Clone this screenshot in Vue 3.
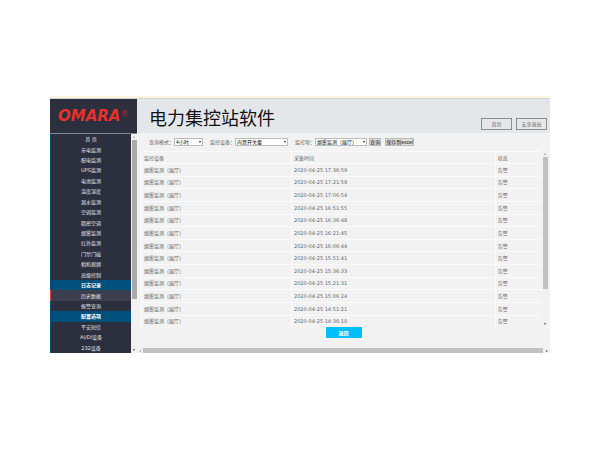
<template>
  <div class="page">
    <div class="app">
      <header class="header">
        <div class="logo">OMARA<sup>®</sup></div>
        <h1>电力集控站软件</h1>
        <nav class="actions">
          <button type="button">首页</button>
          <button type="button">安全退出</button>
        </nav>
      </header>

      <div class="body">
        <aside class="sidebar">
          <nav class="menu">
            <a
              v-for="item in menu"
              :key="item.text"
              href="#"
              :class="{ group: item.group, current: item.text === current }"
              @click.prevent="current = item.text"
            >{{ item.text }}</a>
          </nav>
          <div class="vbar side-bar">
            <i class="arrow up"></i>
            <span class="thumb"></span>
            <i class="arrow down"></i>
          </div>
        </aside>

        <main class="content">
          <form class="filters" @submit.prevent>
            <label for="mode">查询模式：</label>
            <div class="select mode">
              <select id="mode" v-model="mode">
                <option>4小时</option>
                <option>8小时</option>
              </select>
            </div>
            <label for="device">监控设备：</label>
            <div class="select device">
              <select id="device" v-model="device">
                <option>内置开关量</option>
              </select>
            </div>
            <label for="point">监控项：</label>
            <div class="select point">
              <select id="point" v-model="point">
                <option>烟雾监测（展厅）</option>
              </select>
            </div>
            <button type="submit" class="query">查询</button>
            <button type="button" class="export">保存到excel</button>
          </form>

          <div class="list">
            <table>
              <thead>
                <tr>
                  <th class="name">监控设备</th>
                  <th class="time">采集时间</th>
                  <th>状态</th>
                </tr>
              </thead>
              <tbody>
                <tr v-for="time in times" :key="time">
                  <td>烟雾监测（展厅）</td>
                  <td>2020-04-25 {{ time }}</td>
                  <td>告警</td>
                </tr>
              </tbody>
            </table>
            <div class="vbar list-bar">
              <i class="arrow up"></i>
              <span class="thumb"></span>
              <i class="arrow down"></i>
            </div>
          </div>

          <button type="button" class="back">返回</button>

          <div class="hbar">
            <i class="arrow left"></i>
            <span class="thumb"></span>
            <i class="arrow right"></i>
          </div>
        </main>
      </div>
    </div>
  </div>
</template>

<script setup>
import { ref } from 'vue'

const current = ref('历史数据')
const mode = ref('4小时')
const device = ref('内置开关量')
const point = ref('烟雾监测（展厅）')

const menu = [
  { text: '首 页' },
  { text: '市电监测' },
  { text: '配电监测' },
  { text: 'UPS监测' },
  { text: '电池监测' },
  { text: '温度湿度' },
  { text: '漏水监测' },
  { text: '空调监测' },
  { text: '精密空调' },
  { text: '烟雾监测' },
  { text: '红外监测' },
  { text: '门禁门磁' },
  { text: '相机视频' },
  { text: '高级控制' },
  { text: '日志记录', group: true },
  { text: '历史数据' },
  { text: '报警查询' },
  { text: '配置选项', group: true },
  { text: '平安短信' },
  { text: 'AI/DI设备' },
  { text: '232设备' }
]

const times = [
  '17:36:59',
  '17:21:59',
  '17:06:54',
  '16:51:55',
  '16:36:48',
  '16:21:45',
  '16:06:44',
  '15:51:41',
  '15:36:33',
  '15:21:31',
  '15:06:24',
  '14:51:21',
  '14:36:10'
]
</script>

<style>
body {
  margin: 0;
  background: #fff;
}
</style>

<style scoped>
.page {
  padding: 96px 50px;
  font-family: "DejaVu Sans", "Noto Sans CJK SC", sans-serif;
  font-size: 5px;
  line-height: 8px;
  color: #666;
}

.page * {
  box-sizing: border-box;
}

button,
select {
  font-family: "Liberation Sans", "Noto Sans CJK SC", sans-serif;
  font-size: 5px;
  line-height: 6px;
  margin: 0;
  padding: 0;
}

.app {
  border-top: 2px solid #fdf6de;
}

.header {
  display: flex;
  height: 35px;
  background: #e3e7ea;
  border-top: 1px solid #d0d4d5;
}

.logo {
  flex: none;
  width: 87px;
  padding-left: 8px;
  background: #2b2f3e;
  color: #e93029;
  font-size: 15px;
  font-weight: bold;
  font-style: italic;
  line-height: 34px;
  white-space: nowrap;
}

.logo sup {
  color: #b3242b;
  font-size: 8px;
  font-weight: normal;
  font-style: normal;
  line-height: 8px;
  vertical-align: 4px;
}

h1 {
  flex: 1;
  margin: 0;
  padding-left: 12px;
  color: #111;
  font-family: "Noto Sans CJK SC", sans-serif;
  font-size: 18px;
  font-weight: normal;
  line-height: 36px;
}

.actions {
  display: flex;
  gap: 4px;
  align-items: flex-end;
  padding: 0 3px 3px 0;
}

.actions button {
  width: 31px;
  height: 12px;
  border: 1px solid #8b8e90;
  background: transparent;
  color: #666;
}

.body {
  display: flex;
}

.sidebar {
  flex: none;
  display: flex;
  width: 87px;
  border-top: 1px solid #85888f;
  background: #2b2f3e;
}

.menu {
  flex: 1;
  display: grid;
  grid-auto-rows: 1fr;
}

.menu a {
  display: flex;
  align-items: center;
  justify-content: center;
  border-left: 1px solid #03507b;
  color: #e4e5e8;
  text-decoration: none;
  line-height: 8px;
  white-space: pre;
}

.menu a.group {
  background: #00507d;
  color: #fff;
  font-weight: bold;
}

.menu a.current {
  border-left-color: #e0484d;
  background: #3d3e4d;
}

.vbar {
  display: flex;
  flex-direction: column;
  align-items: center;
  justify-content: space-between;
  flex: none;
  width: 6px;
  padding: 2px 0;
  background: #f1f1f1;
}

.vbar .thumb {
  width: 5px;
}

.side-bar .thumb {
  flex: 1;
  margin: 2px 0 50px;
  background: #a9a9aa;
}

.list-bar .thumb {
  flex: 1;
  margin: 2px 0 34px;
  background: #c1c1c1;
}

.arrow {
  flex: none;
  border: 1px solid transparent;
}

.arrow.up {
  border-top: 0;
  border-bottom: 2px solid #a3a3a3;
}

.arrow.down {
  border-bottom: 0;
  border-top: 2px solid #505050;
}

.arrow.left {
  border-left: 0;
  border-right: 2px solid #a3a3a3;
}

.arrow.right {
  border-right: 0;
  border-left: 2px solid #505050;
}

.content {
  flex: 1;
  min-width: 0;
  display: flex;
  flex-direction: column;
  background: #f2f2f2;
}

.filters {
  display: flex;
  align-items: center;
  height: 18px;
  padding-left: 12px;
  white-space: nowrap;
}

.select {
  position: relative;
  margin-right: 7px;
}

.select::after {
  content: "";
  position: absolute;
  top: 3px;
  right: 2px;
  border: 1px solid transparent;
  border-top: 2px solid #222;
  border-bottom: 0;
  pointer-events: none;
}

.select select {
  display: block;
  width: 100%;
  height: 8px;
  padding-left: 1px;
  border: 1px solid #bbb;
  border-radius: 0;
  background: #fff;
  color: #111;
  appearance: none;
}

.mode {
  width: 29px;
}

.device {
  width: 53px;
}

.point {
  width: 52px;
  margin-right: 2px;
}

.filters button {
  height: 8px;
  border: 1px solid #bbb;
  background: #ddd;
  color: #111;
}

.query {
  width: 12px;
}

.export {
  width: 29px;
  margin-left: 4px;
}

.list {
  display: flex;
  gap: 1px;
  padding: 0 2px 0 4px;
}

table {
  flex: 1;
  height: 176px;
  border-collapse: collapse;
  table-layout: fixed;
}

thead tr {
  height: 12px;
}

th,
td {
  padding: 0 0 0 2px;
  border-top: 1px solid #fafafa;
  border-left: 1px solid #fafafa;
  font-weight: normal;
  text-align: left;
  line-height: 8px;
}

.name {
  width: 150px;
}

.time {
  width: 51%;
}

.back {
  align-self: center;
  width: 36px;
  height: 11px;
  margin: 0 0 10px;
  border: 0;
  background: #00bfff;
  color: #fff;
  font-weight: bold;
}

.hbar {
  display: flex;
  align-items: center;
  height: 5px;
  padding: 0 2px;
  background: #f1f1f1;
}

.hbar .thumb {
  flex: 1;
  height: 5px;
  margin: 0 3px 0 2px;
  background: #c1c1c1;
}
</style>
